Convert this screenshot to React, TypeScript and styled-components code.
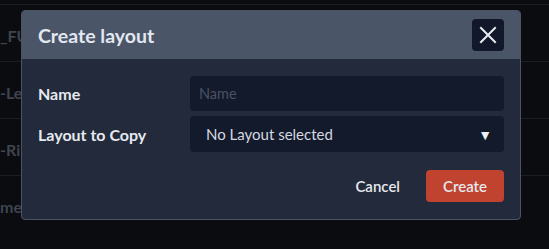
import styled, { createGlobalStyle } from "styled-components"

const GlobalStyle = createGlobalStyle`
    html, body {
        margin: 0;
        padding: 0;
        background: #0b0c10;
        font-family: Lato, "Noto Sans", "Liberation Sans", sans-serif;
    }
    body {
        width: 549px;
        height: 249px;
        overflow: hidden;
    }
`

const rows = ["_FU", "-Le", "-Ri", "me"]

export default function App(){
    return(
        <Page>
            <GlobalStyle/>
            <List>
                {rows.map((r) => (
                    <Row key={r}><RowText>{r}</RowText></Row>
                ))}
            </List>
            <Modal>
                <Header>
                    <Title>Create layout</Title>
                    <CloseButton aria-label="Close">
                        <svg width="18" height="18" viewBox="0 0 18 18">
                            <path d="M2 2 L16 16 M16 2 L2 16" stroke="#e8ebf0" strokeWidth="2" strokeLinecap="square"/>
                        </svg>
                    </CloseButton>
                </Header>
                <Body>
                    <Form>
                        <Label>Name</Label>
                        <Input placeholder="Name"/>
                        <Label>Layout to Copy</Label>
                        <Select>
                            <span>No Layout selected</span>
                            <Caret>▼</Caret>
                        </Select>
                    </Form>
                    <Footer>
                        <Button>Cancel</Button>
                        <Button primary>Create</Button>
                    </Footer>
                </Body>
            </Modal>
        </Page>
    )
}

const Page = styled.div`
    position: relative;
    width: 549px;
    height: 249px;
    overflow: hidden;
`

const List = styled.div`
    padding-top: 4px;
`

const Row = styled.div`
    height: 57px;
    border-top: 1px solid #1a1d24;
    display: flex;
    align-items: center;
    padding-top: 4px;
    box-sizing: border-box;
`

const RowText = styled.div`
    width: 21px;
    overflow: hidden;
    white-space: nowrap;
    font-size: 16px;
    font-weight: 700;
    color: #3f444e;
`

const Modal = styled.div`
    position: absolute;
    left: 21px;
    top: 10px;
    width: 500px;
    height: 210px;
    box-sizing: border-box;
    border: 1px solid #4a5466;
    border-radius: 4px;
    background: #232a3b;
    overflow: hidden;
`

const Header = styled.div`
    height: 48px;
    display: flex;
    align-items: center;
    justify-content: space-between;
    padding: 0 16px;
    background: #4a5568;
`

const Title = styled.div`
    font-size: 19.5px;
    font-weight: 700;
    color: #e2e8f0;
`

const CloseButton = styled.button`
    width: 32px;
    height: 32px;
    border: none;
    border-radius: 4px;
    background: #121829;
    display: flex;
    align-items: center;
    justify-content: center;
    padding: 0;
`

const Body = styled.div`
    padding: 17px 16px;
`

const Form = styled.div`
    display: grid;
    grid-template-columns: 152px 1fr;
    row-gap: 5px;
    align-items: center;
`

const Label = styled.div`
    font-size: 16px;
    font-weight: 700;
    color: #e6eaf0;
`

const Input = styled.input`
    height: 35px;
    box-sizing: border-box;
    border: none;
    border-radius: 4px;
    background: #131a2b;
    padding: 0 9px;
    font-family: inherit;
    font-size: 14.5px;
    color: #d0d4dc;
    outline: none;

    &::placeholder{
        color: #4a5163;
    }
`

const Select = styled.div`
    height: 36px;
    box-sizing: border-box;
    border-radius: 4px;
    background: #131a2b;
    padding: 0 12px 0 16px;
    display: flex;
    align-items: center;
    justify-content: space-between;
    font-size: 15px;
    color: #d4d8e0;
`

const Caret = styled.span`
    font-size: 14px;
    color: #eef0f4;
`

const Footer = styled.div`
    margin-top: 18px;
    display: flex;
    justify-content: flex-end;
    gap: 12px;
`

const Button = styled.button<{ primary?: boolean }>`
    height: 32px;
    width: ${(p) => (p.primary ? "78px" : "auto")};
    padding: 0 ${(p) => (p.primary ? "0" : "14px")};
    border: none;
    border-radius: 4px;
    background: ${(p) => (p.primary ? "#c0432f" : "transparent")};
    color: #e6e8ee;
    font-family: inherit;
    font-size: 15px;
    font-weight: 600;
`
